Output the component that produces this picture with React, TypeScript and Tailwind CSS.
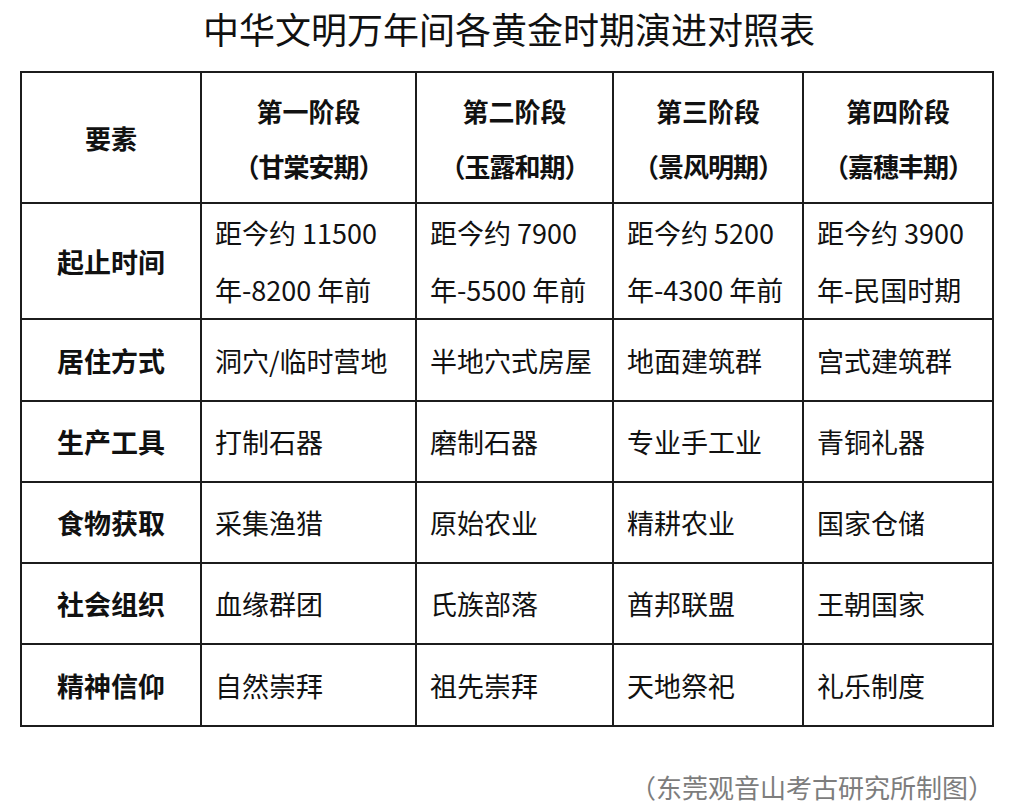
import React from "react";

const headers: [string, string][] = [
  ["第一阶段", "（甘棠安期）"],
  ["第二阶段", "（玉露和期）"],
  ["第三阶段", "（景风明期）"],
  ["第四阶段", "（嘉穗丰期）"],
];

const rows: { label: string; h: string; cells: string[][] }[] = [
  {
    label: "起止时间",
    h: "h-[114px]",
    cells: [
      ["距今约 11500", "年-8200 年前"],
      ["距今约 7900", "年-5500 年前"],
      ["距今约 5200", "年-4300 年前"],
      ["距今约 3900", "年-民国时期"],
    ],
  },
  { label: "居住方式", h: "h-[82px]", cells: [["洞穴/临时营地"], ["半地穴式房屋"], ["地面建筑群"], ["宫式建筑群"]] },
  { label: "生产工具", h: "h-[81px]", cells: [["打制石器"], ["磨制石器"], ["专业手工业"], ["青铜礼器"]] },
  { label: "食物获取", h: "h-[81px]", cells: [["采集渔猎"], ["原始农业"], ["精耕农业"], ["国家仓储"]] },
  { label: "社会组织", h: "h-[81px]", cells: [["血缘群团"], ["氏族部落"], ["酋邦联盟"], ["王朝国家"]] },
  { label: "精神信仰", h: "h-[82px]", cells: [["自然崇拜"], ["祖先崇拜"], ["天地祭祀"], ["礼乐制度"]] },
];

const cell = "border-2 border-[#1c1c1c]";

export default function App() {
  return (
    <div
      className="w-[1018px] h-[803px] overflow-hidden bg-white text-[#111]"
      style={{ fontFamily: '"Noto Sans CJK SC", "Noto Sans", sans-serif' }}
    >
      <div className="h-[56px] leading-[56px] text-center text-[36px]">
        中华文明万年间各黄金时期演进对照表
      </div>
      <div className="pt-[15px] pl-[20px]">
        <table className="border-collapse table-fixed w-[972px]">
          <colgroup>
            <col className="w-[180px]" />
            <col className="w-[215px]" />
            <col className="w-[197px]" />
            <col className="w-[190px]" />
            <col className="w-[190px]" />
          </colgroup>
          <thead>
            <tr className="h-[131px]">
              <th className={`${cell} text-center font-bold text-[26px] leading-[55px]`}>要素</th>
              {headers.map(([a, b]) => (
                <th key={a} className={`${cell} text-center font-bold text-[26px] leading-[55px]`}>
                  <div>{a}</div>
                  <div className="tracking-[-1px]">{b}</div>
                </th>
              ))}
            </tr>
          </thead>
          <tbody>
            {rows.map((r) => (
              <tr key={r.label} className={r.h}>
                <td className={`${cell} text-center font-bold text-[27px] leading-[57px]`}>{r.label}</td>
                {r.cells.map((lines, i) => (
                  <td key={i} className={`${cell} pl-[13px] pr-0 text-left text-[27px] leading-[57px] whitespace-nowrap`}>
                    {lines.map((l) => (
                      <div key={l}>{l}</div>
                    ))}
                  </td>
                ))}
              </tr>
            ))}
          </tbody>
        </table>
      </div>
      <div className="mt-[47px] pr-[24px] text-right text-[26px] leading-none text-[#7d7d7d]">
        （东莞观音山考古研究所制图）
      </div>
    </div>
  );
}
